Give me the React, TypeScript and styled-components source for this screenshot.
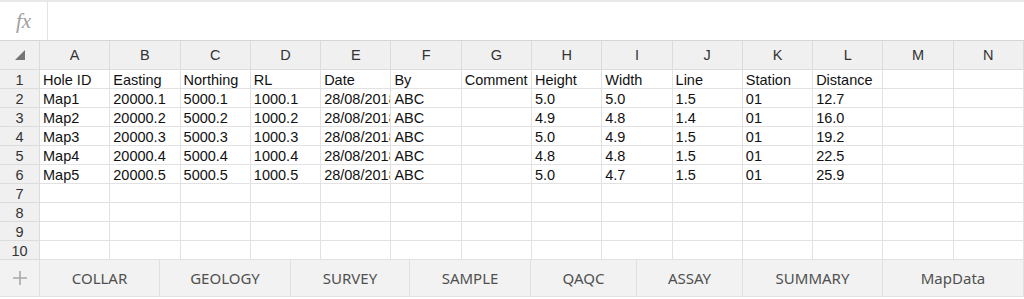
import styled, { createGlobalStyle } from 'styled-components';

const GlobalStyle = createGlobalStyle`
  * {
    box-sizing: border-box;
  }

  body {
    margin: 0;
    background: #fff;
    font-family: 'Liberation Sans', Arial, sans-serif;
  }
`;

const Page = styled.div`
  width: 1024px;
  height: 299px;

  display: flex;
  flex-direction: column;

  overflow: hidden;
`;

const FormulaBar = styled.div`
  height: 41px;

  display: flex;

  border-top: 2px solid #e8e8e8;
  border-bottom: 1px solid #d6d6d6;
`;

const FxLabel = styled.div`
  width: 48px;

  display: flex;
  align-items: center;
  justify-content: center;

  font-family: 'Liberation Serif', 'Times New Roman', serif;
  font-style: italic;
  font-size: 21px;
  color: #a0a0a0;

  border-right: 1px solid #e4e4e4;
`;

const FormulaInput = styled.div`
  flex: 1;
`;

const Grid = styled.div`
  display: grid;
  grid-template-columns: 40px repeat(14, 1fr);
  grid-auto-rows: 19px;
  grid-template-rows: 29px;
`;

const HeaderCell = styled.div`
  display: flex;
  align-items: center;
  justify-content: center;

  font-size: 14.5px;
  color: #333;

  background: #f0f0f0;
  border-right: 1px solid #dcdcdc;
  border-bottom: 1px solid #dcdcdc;
`;

const RowNumber = styled.div`
  padding-top: 2px;

  text-align: center;
  font-size: 14.5px;
  line-height: 16px;
  color: #333;

  background: #f0f0f0;
  border-right: 1px solid #dcdcdc;
  border-bottom: 1px solid #dcdcdc;
`;

const Cell = styled.div`
  padding: 2px 0 0 3px;

  font-size: 14.5px;
  line-height: 16px;
  color: #111;
  white-space: nowrap;

  overflow: hidden;

  border-right: 1px solid #e2e2e2;
  border-bottom: 1px solid #e2e2e2;
`;

const TabBar = styled.div`
  height: 37px;

  display: flex;

  background: #f2f2f2;
  border-bottom: 1px solid #e2e2e2;
`;

const AddTab = styled.div`
  width: 40px;

  display: flex;
  align-items: center;
  justify-content: center;

  border-right: 1px solid #e0e0e0;
`;

const Tab = styled.div<{ $width?: number }>`
  ${(p) => (p.$width ? `width: ${p.$width}px;` : 'flex: 1;')}

  display: flex;
  align-items: center;
  justify-content: center;

  font-family: 'Noto Sans', 'Open Sans', sans-serif;
  font-size: 15px;
  color: #505050;

  border-right: 1px solid #e0e0e0;
`;

const columns = ['A', 'B', 'C', 'D', 'E', 'F', 'G', 'H', 'I', 'J', 'K', 'L', 'M', 'N'];

const rows: string[][] = [
  ['Hole ID', 'Easting', 'Northing', 'RL', 'Date', 'By', 'Comment', 'Height', 'Width', 'Line', 'Station', 'Distance'],
  ['Map1', '20000.1', '5000.1', '1000.1', '28/08/2018', 'ABC', '', '5.0', '5.0', '1.5', '01', '12.7'],
  ['Map2', '20000.2', '5000.2', '1000.2', '28/08/2018', 'ABC', '', '4.9', '4.8', '1.4', '01', '16.0'],
  ['Map3', '20000.3', '5000.3', '1000.3', '28/08/2018', 'ABC', '', '5.0', '4.9', '1.5', '01', '19.2'],
  ['Map4', '20000.4', '5000.4', '1000.4', '28/08/2018', 'ABC', '', '4.8', '4.8', '1.5', '01', '22.5'],
  ['Map5', '20000.5', '5000.5', '1000.5', '28/08/2018', 'ABC', '', '5.0', '4.7', '1.5', '01', '25.9'],
  [],
  [],
  [],
  [],
];

// last tab fills the rest of the bar
const sheets: { name: string; width?: number }[] = [
  { name: 'COLLAR', width: 120 },
  { name: 'GEOLOGY', width: 131 },
  { name: 'SURVEY', width: 119 },
  { name: 'SAMPLE', width: 121 },
  { name: 'QAQC', width: 106 },
  { name: 'ASSAY', width: 106 },
  { name: 'SUMMARY', width: 140 },
  { name: 'MapData' },
];

export default function App() {
  return (
    <Page>
      <GlobalStyle />
      <FormulaBar>
        <FxLabel>fx</FxLabel>
        <FormulaInput />
      </FormulaBar>
      <Grid>
        <HeaderCell>
          <svg width="10" height="10" viewBox="0 0 10 10">
            <polygon points="10,0 10,10 0,10" fill="#757575" />
          </svg>
        </HeaderCell>
        {columns.map((c) => (
          <HeaderCell key={c}>{c}</HeaderCell>
        ))}
        {rows.map((row, r) => [
          <RowNumber key={`n${r}`}>{r + 1}</RowNumber>,
          ...columns.map((c, i) => <Cell key={`${c}${r}`}>{row[i] ?? ''}</Cell>),
        ])}
      </Grid>
      <TabBar>
        <AddTab>
          <svg width="14" height="14" viewBox="0 0 14 14">
            <path d="M7 0v14M0 7h14" stroke="#a8a8a8" strokeWidth="1.6" />
          </svg>
        </AddTab>
        {sheets.map((s) => (
          <Tab key={s.name} $width={s.width}>
            {s.name}
          </Tab>
        ))}
      </TabBar>
    </Page>
  );
}
